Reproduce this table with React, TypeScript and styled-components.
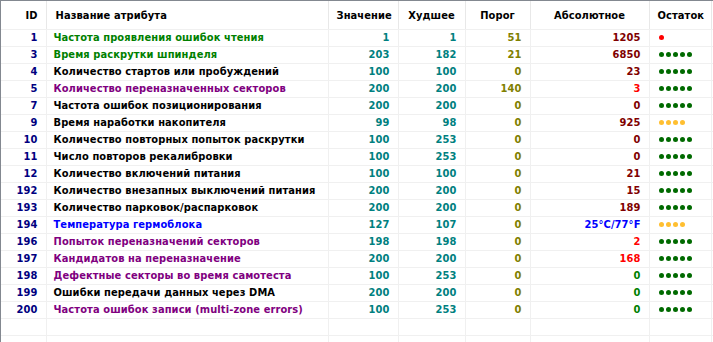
import React from "react";
import styled, { createGlobalStyle } from "styled-components";

const GlobalStyle = createGlobalStyle`
  html, body {
    margin: 0;
    padding: 0;
    background: #ffffff;
  }
`;

const C = {
  navy: "#000080",
  green: "#008000",
  black: "#000000",
  purple: "#800080",
  blue: "#0000ff",
  teal: "#008080",
  olive: "#808000",
  maroon: "#800000",
  red: "#ff0000",
  dotGreen: "#006a00",
  dotOrange: "#ffbf30",
  dotRed: "#ff0000",
};

type Attr = {
  id: number;
  name: string;
  nameColor: string;
  value: number;
  worst: number;
  threshold: number;
  raw: string;
  rawColor: string;
  dots: number;
  dotColor: string;
};

const rows: Attr[] = [
  { id: 1, name: "Частота проявления ошибок чтения", nameColor: C.green, value: 1, worst: 1, threshold: 51, raw: "1205", rawColor: C.maroon, dots: 1, dotColor: C.dotRed },
  { id: 3, name: "Время раскрутки шпинделя", nameColor: C.green, value: 203, worst: 182, threshold: 21, raw: "6850", rawColor: C.maroon, dots: 5, dotColor: C.dotGreen },
  { id: 4, name: "Количество стартов или пробуждений", nameColor: C.black, value: 100, worst: 100, threshold: 0, raw: "23", rawColor: C.maroon, dots: 5, dotColor: C.dotGreen },
  { id: 5, name: "Количество переназначенных секторов", nameColor: C.purple, value: 200, worst: 200, threshold: 140, raw: "3", rawColor: C.red, dots: 5, dotColor: C.dotGreen },
  { id: 7, name: "Частота ошибок позиционирования", nameColor: C.black, value: 200, worst: 200, threshold: 0, raw: "0", rawColor: C.maroon, dots: 5, dotColor: C.dotGreen },
  { id: 9, name: "Время наработки накопителя", nameColor: C.black, value: 99, worst: 98, threshold: 0, raw: "925", rawColor: C.maroon, dots: 4, dotColor: C.dotOrange },
  { id: 10, name: "Количество повторных попыток раскрутки", nameColor: C.black, value: 100, worst: 253, threshold: 0, raw: "0", rawColor: C.maroon, dots: 5, dotColor: C.dotGreen },
  { id: 11, name: "Число повторов рекалибровки", nameColor: C.black, value: 100, worst: 253, threshold: 0, raw: "0", rawColor: C.maroon, dots: 5, dotColor: C.dotGreen },
  { id: 12, name: "Количество включений питания", nameColor: C.black, value: 100, worst: 100, threshold: 0, raw: "21", rawColor: C.maroon, dots: 5, dotColor: C.dotGreen },
  { id: 192, name: "Количество внезапных выключений питания", nameColor: C.black, value: 200, worst: 200, threshold: 0, raw: "15", rawColor: C.maroon, dots: 5, dotColor: C.dotGreen },
  { id: 193, name: "Количество парковок/распарковок", nameColor: C.black, value: 200, worst: 200, threshold: 0, raw: "189", rawColor: C.maroon, dots: 5, dotColor: C.dotGreen },
  { id: 194, name: "Температура гермоблока", nameColor: C.blue, value: 127, worst: 107, threshold: 0, raw: "25°C/77°F", rawColor: C.blue, dots: 4, dotColor: C.dotOrange },
  { id: 196, name: "Попыток переназначений секторов", nameColor: C.purple, value: 198, worst: 198, threshold: 0, raw: "2", rawColor: C.red, dots: 5, dotColor: C.dotGreen },
  { id: 197, name: "Кандидатов на переназначение", nameColor: C.purple, value: 200, worst: 200, threshold: 0, raw: "168", rawColor: C.red, dots: 5, dotColor: C.dotGreen },
  { id: 198, name: "Дефектные секторы во время самотеста", nameColor: C.purple, value: 100, worst: 253, threshold: 0, raw: "0", rawColor: C.green, dots: 5, dotColor: C.dotGreen },
  { id: 199, name: "Ошибки передачи данных через DMA", nameColor: C.black, value: 200, worst: 200, threshold: 0, raw: "0", rawColor: C.green, dots: 5, dotColor: C.dotGreen },
  { id: 200, name: "Частота ошибок записи (multi-zone errors)", nameColor: C.purple, value: 100, worst: 253, threshold: 0, raw: "0", rawColor: C.green, dots: 5, dotColor: C.dotGreen },
];

const colWidths = [45, 282, 70, 67, 65, 119, 62];

const SmartApp = () => {
  return (
    <>
      <GlobalStyle />
      <Frame>
        <Table>
          <colgroup>
            {colWidths.map((w, i) => (
              <col key={i} style={{ width: w }} />
            ))}
            <col />
          </colgroup>
          <thead>
            <tr>
              <HeadCell align="right">ID</HeadCell>
              <HeadCell align="left" $pad={9}>Название атрибута</HeadCell>
              <HeadCell>Значение</HeadCell>
              <HeadCell>Худшее</HeadCell>
              <HeadCell>Порог</HeadCell>
              <HeadCell>Абсолютное</HeadCell>
              <HeadCell>Остаток</HeadCell>
              <HeadFill />
            </tr>
          </thead>
          <tbody>
            {rows.map((r) => (
              <tr key={r.id}>
                <Cell align="right" $color={C.navy}>{r.id}</Cell>
                <Cell align="left" $color={r.nameColor}>{r.name}</Cell>
                <Cell align="right" $color={C.teal}>{r.value}</Cell>
                <Cell align="right" $color={C.teal}>{r.worst}</Cell>
                <Cell align="right" $color={C.olive}>{r.threshold}</Cell>
                <Cell align="right" $color={r.rawColor}>{r.raw}</Cell>
                <Cell align="left">
                  <Dots>
                    {Array.from({ length: r.dots }).map((_, i) => (
                      <Dot key={i} $color={r.dotColor} />
                    ))}
                  </Dots>
                </Cell>
                <Fill />
              </tr>
            ))}
            {[0, 1].map((k) => (
              <tr key={"empty" + k}>
                {colWidths.map((_, i) => (
                  <Cell key={i} />
                ))}
                <Fill />
              </tr>
            ))}
          </tbody>
        </Table>
      </Frame>
    </>
  );
};

const Frame = styled.div`
  width: 713px;
  height: 342px;
  box-sizing: border-box;
  overflow: hidden;
  background: #ffffff;
  border-top: 1px solid #838890;
  border-left: 1px solid #838890;
  font-family: "DejaVu Sans Condensed", "DejaVu Sans", sans-serif;
  font-weight: bold;
  font-size: 11px;
  letter-spacing: 0.1px;
`;

const Table = styled.table`
  border-collapse: collapse;
  table-layout: fixed;
  width: 712px;
`;

const HeadCell = styled.th<{ $pad?: number }>`
  height: 28px;
  padding: 1px 8px 0 ${({ $pad }) => ($pad ? $pad : 8)}px;
  text-align: ${({ align }) => align || "center"};
  color: #000000;
  font-weight: bold;
  white-space: nowrap;
  border-right: 1px solid #e8e8e8;
  border-bottom: 1px solid #f0f0f0;
  box-sizing: border-box;
`;

const HeadFill = styled.th`
  border-bottom: 1px solid #f0f0f0;
`;

const Cell = styled.td<{ $color?: string }>`
  height: 16px;
  padding: 0 8px 0 7px;
  text-align: ${({ align }) => align || "left"};
  color: ${({ $color }) => $color || "#000"};
  white-space: nowrap;
  overflow: hidden;
  line-height: 16px;
  border-right: 1px solid #f0f0f0;
  border-bottom: 1px solid #f0f0f0;
`;

const Fill = styled.td`
  border-bottom: 1px solid #f0f0f0;
`;

const Dots = styled.div`
  display: flex;
  gap: 2px;
  padding-left: 2px;
  align-items: center;
`;

const Dot = styled.span<{ $color: string }>`
  width: 5px;
  height: 5px;
  border-radius: 50%;
  background: ${({ $color }) => $color};
`;

export default SmartApp;
